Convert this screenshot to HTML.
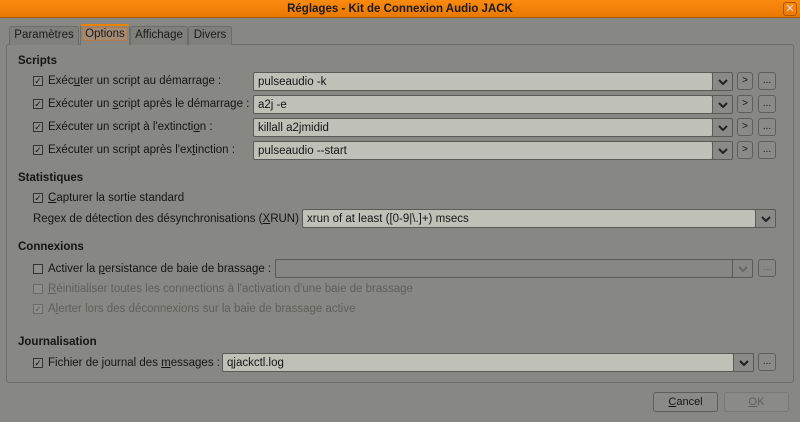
<!DOCTYPE html><html><head><meta charset="utf-8"><style>
*{box-sizing:border-box;margin:0;padding:0}
body{width:800px;height:422px;background:#878883;font-family:"Liberation Sans",sans-serif;font-size:11.5px;color:#151515;position:relative;overflow:hidden}
.a{position:absolute;white-space:nowrap}
.title{left:0;top:0;width:800px;height:18px;background:linear-gradient(#fb8a10,#e87800);border-bottom:1px solid #a85a00;text-align:center;font-weight:bold;line-height:18px;color:#1a1a1a}
.x{right:3px;top:2px;width:14px;height:14px;border:1px solid #b05800;border-radius:3px;color:#fde;font-size:11px;line-height:12px;text-align:center}
.tab{top:26px;height:19px;border:1px solid #6c6d68;border-bottom:none;border-radius:3px 3px 0 0;background:#7f807b;line-height:17px;text-align:center;color:#1a1a1a}
.panel{left:6px;top:44px;width:788px;height:339px;border:1px solid #6c6d68;border-radius:3px}
.h{font-weight:bold;left:18px;margin-top:1px}
.cb{width:10px;height:10px;border:1px solid #333;background:#8e8f8a;font-size:9px;line-height:8px;text-align:center;left:33px}
.lbl{left:48px;margin-top:1px}
.f{height:19px;background:#bfc1b9;border:1px solid #5a5b56;border-radius:2px;padding-left:4px;line-height:19px}
.dd{height:19px;width:21px;border:1px solid #5a5b56;border-radius:0 2px 2px 0;background:#8a8b86}
.dd svg{position:absolute;left:5px;top:6px}
.b{height:18px;border:1px solid #5e5f5a;border-radius:3px;background:#8a8b86;text-align:center;line-height:15px;font-size:10px}
.dis{color:#5e5f5a}
u{text-decoration:underline}
</style></head><body>
<div class="a title">Réglages - Kit de Connexion Audio JACK</div>
<div class="a x">✕</div>
<div class="a panel"></div>
<div class="a tab" style="left:9px;width:70px">Paramètres</div>
<div class="a tab" style="left:80px;width:50px;top:24px;height:21px;background:#878883;border-top:2px solid #f08000"><span style="background:#a58a72;border:1px solid #b07a4a;border-radius:2px;padding:0 2px">Options</span></div>
<div class="a tab" style="left:130px;width:58px">Affichage</div>
<div class="a tab" style="left:188px;width:44px">Divers</div>

<div class="a h" style="top:54px">Scripts</div>
<div class="a cb" style="top:76px">✓</div><div class="a lbl" style="top:74px">Exéc<u>u</u>ter un script au démarrage :</div>
<div class="a f" style="left:253px;top:72px;width:460px">pulseaudio -k</div><div class="a dd" style="left:712px;top:72px"><svg width="10" height="6"><polyline points="1,1 5,5 9,1" fill="none" stroke="#222" stroke-width="2"/></svg></div>
<div class="a b" style="left:737px;top:72px;width:16px">&gt;</div><div class="a b" style="left:758px;top:72px;width:18px">...</div>

<div class="a cb" style="top:99px">✓</div><div class="a lbl" style="top:97px">Exécuter un <u>s</u>cript après le démarrage :</div>
<div class="a f" style="left:253px;top:95px;width:460px">a2j -e</div><div class="a dd" style="left:712px;top:95px"><svg width="10" height="6"><polyline points="1,1 5,5 9,1" fill="none" stroke="#222" stroke-width="2"/></svg></div>
<div class="a b" style="left:737px;top:95px;width:16px">&gt;</div><div class="a b" style="left:758px;top:95px;width:18px">...</div>

<div class="a cb" style="top:122px">✓</div><div class="a lbl" style="top:120px">Exécuter un script à l'extincti<u>o</u>n :</div>
<div class="a f" style="left:253px;top:118px;width:460px">killall a2jmidid</div><div class="a dd" style="left:712px;top:118px"><svg width="10" height="6"><polyline points="1,1 5,5 9,1" fill="none" stroke="#222" stroke-width="2"/></svg></div>
<div class="a b" style="left:737px;top:118px;width:16px">&gt;</div><div class="a b" style="left:758px;top:118px;width:18px">...</div>

<div class="a cb" style="top:145px">✓</div><div class="a lbl" style="top:143px">Exécuter un script après l'ex<u>t</u>inction :</div>
<div class="a f" style="left:253px;top:141px;width:460px">pulseaudio --start</div><div class="a dd" style="left:712px;top:141px"><svg width="10" height="6"><polyline points="1,1 5,5 9,1" fill="none" stroke="#222" stroke-width="2"/></svg></div>
<div class="a b" style="left:737px;top:141px;width:16px">&gt;</div><div class="a b" style="left:758px;top:141px;width:18px">...</div>

<div class="a h" style="top:171px">Statistiques</div>
<div class="a cb" style="top:193px">✓</div><div class="a lbl" style="top:191px"><u>C</u>apturer la sortie standard</div>
<div class="a" style="left:33px;top:213px">Regex de détection des désynchronisations (<u>X</u>RUN) :</div>
<div class="a f" style="left:302px;top:209px;width:454px">xrun of at least ([0-9|\.]+) msecs</div><div class="a dd" style="left:755px;top:209px"><svg width="10" height="6"><polyline points="1,1 5,5 9,1" fill="none" stroke="#222" stroke-width="2"/></svg></div>

<div class="a h" style="top:240px">Connexions</div>
<div class="a cb" style="top:264px"></div><div class="a lbl" style="top:262px">Activer la <u>p</u>ersistance de baie de brassage :</div>
<div class="a f" style="left:275px;top:259px;width:458px;background:#878883"></div><div class="a dd" style="left:732px;top:259px;background:#878883"><svg width="10" height="6"><polyline points="1,1 5,5 9,1" fill="none" stroke="#666" stroke-width="2"/></svg></div>
<div class="a b dis" style="left:758px;top:259px;width:18px;background:#878883">...</div>
<div class="a cb" style="top:284px;border-color:#6a6b66"></div><div class="a lbl dis" style="top:282px"><u>R</u>éinitialiser toutes les connections à l'activation d'une baie de brassage</div>
<div class="a cb dis" style="top:304px;border-color:#6a6b66">✓</div><div class="a lbl dis" style="top:302px">A<u>l</u>erter lors des déconnexions sur la baie de brassage active</div>

<div class="a h" style="top:335px">Journalisation</div>
<div class="a cb" style="top:358px">✓</div><div class="a lbl" style="top:356px">Fichier de journal des <u>m</u>essages :</div>
<div class="a f" style="left:222px;top:353px;width:512px">qjackctl.log</div><div class="a dd" style="left:733px;top:353px"><svg width="10" height="6"><polyline points="1,1 5,5 9,1" fill="none" stroke="#222" stroke-width="2"/></svg></div>
<div class="a b" style="left:758px;top:353px;width:18px">...</div>

<div class="a b" style="left:653px;top:392px;width:65px;height:20px;line-height:18px;font-size:11px"><u>C</u>ancel</div>
<div class="a b dis" style="left:724px;top:392px;width:65px;height:20px;line-height:18px;font-size:11px;border-color:#797a75"><u>O</u>K</div>
</body></html>
